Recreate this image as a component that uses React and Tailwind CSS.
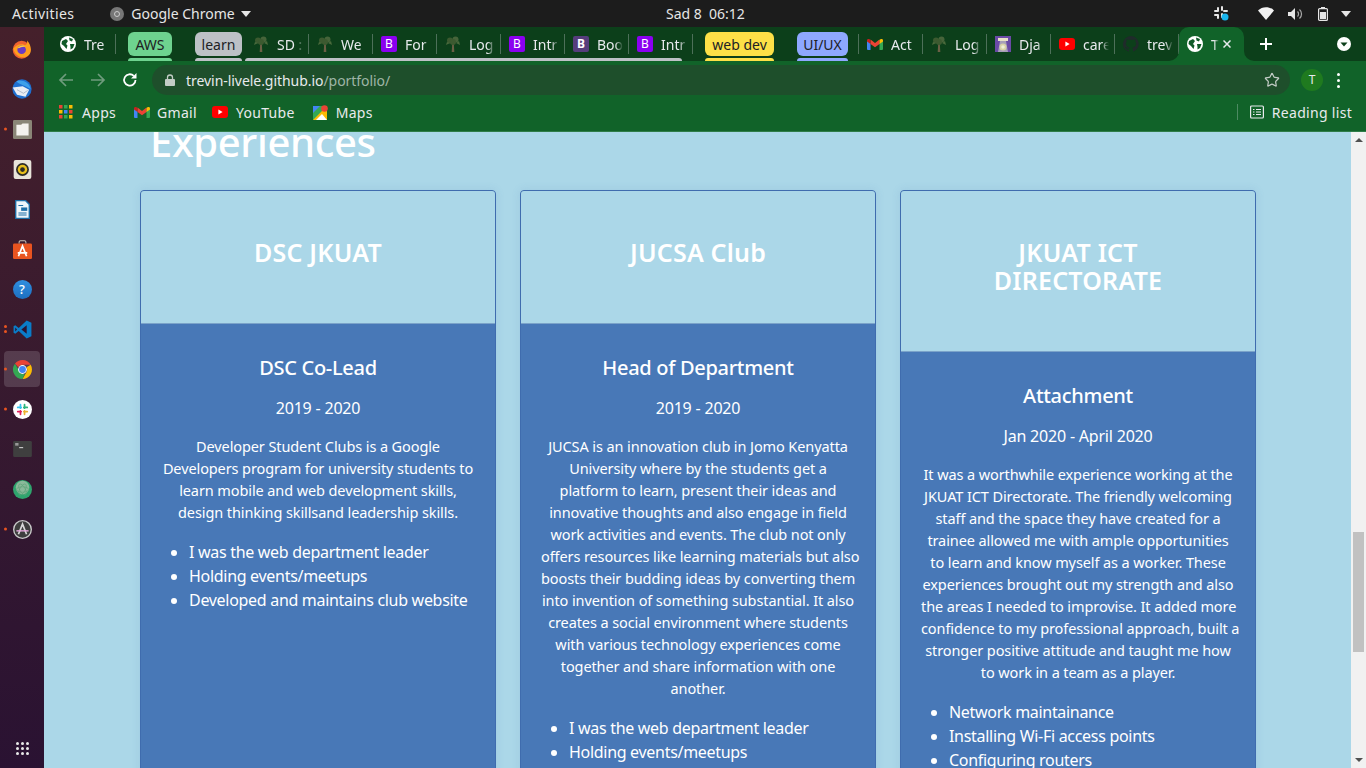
import { Star } from 'lucide-react';

const UI_FONT = "font-['Noto_Sans',sans-serif]";

const Globe = ({ size = 16 }) => (
  <svg width={size} height={size} viewBox="0 0 16 16" className="shrink-0">
    <circle cx="8" cy="8" r="8" fill="#fff" />
    <path d="M2 5 L6 3 L8 5 L6 8 L7.5 9.5 L6.5 13 L4 10 L1.5 8Z M9 1.5 L13 3 L12 5.5 L9.5 4.5Z M10 8 L14.5 8 L13 12 L10.5 13.5 L10.5 11Z" fill="#0f5a28" />
  </svg>
);

const Tree = () => (
  <svg width="16" height="16" viewBox="0 0 16 16" className="shrink-0">
    <path d="M7.200 7 H8.800 L9.300 16 H6.700Z" fill="#6b5f45" />
    <circle cx="5" cy="4.500" r="3" fill="#3c5a30" />
    <circle cx="10.500" cy="3.500" r="3" fill="#46643a" />
    <circle cx="8" cy="6" r="3" fill="#3c5a30" />
    <path d="M2 6 L1 9 L5 7Z M14 5 L15 9 L11 7Z" fill="#4a6a3c" />
  </svg>
);

const Boot = ({ dark }) => (
  <span className={`flex h-4 w-4 shrink-0 items-center justify-center rounded-[2px] text-[12px] leading-none text-white ${dark ? 'bg-[#563d7c] font-bold' : 'bg-[#8b00f0]'}`}>B</span>
);

const GmailIcon = ({ size = 16 }) => (
  <svg width={size} height={size * 0.75} viewBox="0 0 16 12" className="shrink-0">
    <path d="M0 2 V11 a1 1 0 0 0 1 1 H3.5 V5Z" fill="#4285f4" />
    <path d="M16 2 V11 a1 1 0 0 1 -1 1 H12.5 V5Z" fill="#34a853" />
    <path d="M3.5 6 L3.5 1.5 L8 5 L12.5 1.5 L12.5 6 L8 9.2Z" fill="#ea4335" />
    <path d="M0 2.5 a1.6 1.6 0 0 1 2.6 -1.2 L3.5 2 V6 L0 3.4Z" fill="#c5221f" />
    <path d="M16 2.5 a1.6 1.6 0 0 0 -2.6 -1.2 L12.5 2 V6 L16 3.4Z" fill="#fbbc04" />
  </svg>
);

const YoutubeIcon = () => (
  <svg width="16" height="12" viewBox="0 0 16 12" className="shrink-0">
    <rect width="16" height="12" rx="3" fill="#f00" />
    <path d="M6.4 3.4 L10.6 6 L6.4 8.6Z" fill="#fff" />
  </svg>
);

const DjangoIcon = () => (
  <svg width="16" height="16" viewBox="0 0 16 16" className="shrink-0">
    <rect width="16" height="16" fill="#6b4aa6" />
    <rect x="3" y="2" width="10" height="3" fill="#e8e0c8" />
    <path d="M5 5 H11 L13 16 H3Z" fill="#a89fb8" />
    <circle cx="8" cy="11" r="3.500" fill="#d8d2a8" />
    <circle cx="8" cy="11" r="1.800" fill="#f0eed8" />
  </svg>
);

const GithubIcon = () => (
  <svg width="16" height="16" viewBox="0 0 16 16" fill="#1f2b2a" className="shrink-0">
    <path d="M8 0a8 8 0 0 0-2.500 15.600c.400.100.500-.200.500-.400v-1.400c-2.200.500-2.700-1-2.700-1-.400-.900-.900-1.200-.900-1.200-.700-.500.100-.500.100-.500.800.100 1.200.800 1.200.800.700 1.200 1.900.900 2.300.700.100-.500.300-.900.500-1.100-1.800-.200-3.600-.900-3.600-4 0-.900.300-1.600.800-2.100-.100-.200-.400-1 .100-2.100 0 0 .700-.200 2.200.800a7.600 7.600 0 0 1 4 0c1.500-1 2.200-.800 2.200-.800.400 1.100.200 1.900.100 2.100.500.600.800 1.300.800 2.100 0 3.100-1.900 3.700-3.700 3.900.300.300.600.800.600 1.500v2.200c0 .200.100.500.500.400A8 8 0 0 0 8 0z" />
  </svg>
);

const Tab = ({ icon, label }) => (
  <div className="relative flex h-[34px] w-16 shrink-0 items-center pl-2">
    {icon}
    <span className="ml-2 w-[26px] overflow-hidden whitespace-nowrap text-[14px] text-[#e8eaed] [mask-image:linear-gradient(to_right,black_70%,transparent)]">{label}</span>
    <span className="absolute right-0 top-[7px] h-5 w-px bg-[#4d7059]" />
  </div>
);

const Pill = ({ label, bg, w, ml }) => (
  <div className={`relative flex h-[34px] shrink-0 items-start pt-[5px] ${w} ${ml}`}>
    <span className={`flex h-6 w-full items-center justify-center rounded-md text-[14px] text-[#202124] ${bg}`}>{label}</span>
    <span className={`absolute bottom-0 left-0 right-0 h-[3px] rounded-t-[3px] ${bg}`} />
  </div>
);

function TabStrip() {
  return (
    <div className="flex h-[34px] items-start bg-[#0c3f1a] pl-2">
      <Tab icon={<Globe />} label="Tre" />
      <Pill label="AWS" bg="bg-[#6ed38f]" w="w-11" ml="ml-3" />
      <Pill label="learn" bg="bg-[#bdc1c6]" w="w-[47px]" ml="ml-[23px]" />
      <div className="relative ml-[3px] flex">
        <Tab icon={<Tree />} label="SD :" />
        <Tab icon={<Tree />} label="We" />
        <Tab icon={<Boot />} label="For" />
        <Tab icon={<Tree />} label="Log" />
        <Tab icon={<Boot />} label="Intr" />
        <Tab icon={<Boot dark />} label="Boo" />
        <Tab icon={<Boot />} label="Intr" />
        <span className="absolute bottom-0 left-0 right-[11px] h-[3px] rounded-t-[3px] bg-[#bdc1c6]" />
      </div>
      <Pill label="web dev" bg="bg-[#fde047]" w="w-[69px]" ml="ml-3" />
      <Pill label="UI/UX" bg="bg-[#8ea8ff]" w="w-[51px]" ml="ml-[23px]" />
      <div className="relative ml-[11px] flex">
        <span className="absolute -left-px top-[7px] h-5 w-px bg-[#4d7059]" />
        <Tab icon={<GmailIcon />} label="Act" />
        <Tab icon={<Tree />} label="Log" />
        <Tab icon={<DjangoIcon />} label="Dja" />
        <Tab icon={<YoutubeIcon />} label="care" />
        <Tab icon={<GithubIcon />} label="trev" />
      </div>
      <div className="relative flex h-[34px] w-[65px] shrink-0 items-center rounded-t-[10px] bg-[#116329] pl-2">
        <span className="absolute -left-2.5 bottom-0 h-2.5 w-2.5 overflow-hidden">
          <span className="block h-2.5 w-2.5 rounded-br-[10px] shadow-[5px_5px_0_5px_#116329]" />
        </span>
        <span className="absolute -right-2.5 bottom-0 h-2.5 w-2.5 overflow-hidden">
          <span className="block h-2.5 w-2.5 rounded-bl-[10px] shadow-[-5px_5px_0_5px_#116329]" />
        </span>
        <Globe />
        <span className="ml-[8px] w-[8px] overflow-hidden whitespace-nowrap text-[14px] text-[#e8eaed] [mask-image:linear-gradient(to_right,black_40%,transparent)]">T</span>
        <svg width="8" height="8" viewBox="0 0 8 8" className="ml-[4px]"><path d="M.5 .5 L7.500 7.500 M7.500 .5 L.5 7.500" stroke="#e8eaed" strokeWidth="1.500" /></svg>
      </div>
      <svg width="12" height="12" viewBox="0 0 12 12" className="ml-4 mt-[11px] shrink-0"><path d="M6 0 V12 M0 6 H12" stroke="#fff" strokeWidth="2" /></svg>
      <svg width="14" height="14" viewBox="0 0 14 14" className="ml-[65px] mt-[10px] shrink-0">
        <circle cx="7" cy="7" r="7" fill="#fff" />
        <path d="M3.500 5.500 H10.500 L7 9.500Z" fill="#0c3f1a" />
      </svg>
    </div>
  );
}

function Toolbar() {
  return (
    <div className="flex h-[35px] items-center bg-[#116329] pt-[3px]">
      <svg width="16" height="16" viewBox="0 0 16 16" className="ml-[14px] shrink-0" fill="none" stroke="#6f9c7d" strokeWidth="1.700">
        <path d="M15 8 H2 M8 2 L2 8 L8 14" />
      </svg>
      <svg width="16" height="16" viewBox="0 0 16 16" className="ml-4 shrink-0" fill="none" stroke="#6f9c7d" strokeWidth="1.700">
        <path d="M1 8 H14 M8 2 L14 8 L8 14" />
      </svg>
      <svg width="16" height="16" viewBox="0 0 16 16" className="ml-4 shrink-0" fill="none">
        <path d="M13.500 8 A5.700 5.700 0 1 1 11.800 3.900" stroke="#fff" strokeWidth="1.800" />
        <path d="M14.500 1 V6.500 H9Z" fill="#fff" />
      </svg>
      <div className="ml-[14px] flex h-[30px] w-[1138px] items-center rounded-full bg-[#1e4f2b] pl-[13px] pr-2.5">
        <svg width="10" height="12" viewBox="0 0 10 12" className="shrink-0">
          <rect y="5" width="10" height="7" rx="1" fill="#c3ccc6" />
          <path d="M2.500 5.500 V3.500 a2.500 2.500 0 0 1 5 0 V5.500" fill="none" stroke="#c3ccc6" strokeWidth="1.300" />
        </svg>
        <span className="ml-[11px] text-[14px] tracking-[-0.05px] text-[#e8eaed]">trevin-livele.github.io<span className="text-[#9fb5a6]">/portfolio/</span></span>
        <Star className="ml-auto h-4 w-4 text-[#c3ccc6]" strokeWidth={1.800} />
      </div>
      <span className="ml-[11px] flex h-[22px] w-[22px] items-center justify-center rounded-full bg-[#1f7a1f] text-[12px] text-[#e8eaed]">T</span>
      <div className="ml-[14px] flex flex-col gap-[3px]">
        <span className="h-[3px] w-[3px] rounded-full bg-white" />
        <span className="h-[3px] w-[3px] rounded-full bg-white" />
        <span className="h-[3px] w-[3px] rounded-full bg-white" />
      </div>
    </div>
  );
}

function Bookmarks() {
  return (
    <div className="flex h-9 items-center border-b border-[#2f7d48] bg-[#116329] pb-[3px] text-[14px] tracking-[0.3px] text-[#e8eaed]">
      <svg width="14" height="14" viewBox="0 0 14 14" className="ml-[15px] shrink-0">
        {[0, 5, 10].map((x, i) => [0, 5, 10].map((y, j) => (
          <rect key={`${i}${j}`} x={x} y={y} width="3.500" height="3.500" fill={['#ea4335', '#34a853', '#fbbc04', '#4285f4'][(i + j * 2) % 4]} />
        )))}
      </svg>
      <span className="ml-[9px]">Apps</span>
      <span className="ml-[18px]"><GmailIcon /></span>
      <span className="ml-[7px]">Gmail</span>
      <span className="ml-[15px]"><YoutubeIcon /></span>
      <span className="ml-2">YouTube</span>
      <svg width="15" height="15" viewBox="0 0 15 15" className="ml-[18px] shrink-0">
        <rect y="1" width="14" height="14" fill="#34a853" />
        <path d="M0 15 L14 1 V15Z" fill="#fbbc04" />
        <path d="M0 1 H7 L0 8Z" fill="#4285f4" />
        <path d="M3 15 L9 9 L14 15Z" fill="#fff" />
        <circle cx="11.500" cy="3.500" r="3.300" fill="#ea4335" />
      </svg>
      <span className="ml-[8px]">Maps</span>
      <span className="ml-auto h-[16px] w-px bg-[#4d8a62]" />
      <svg width="14" height="14" viewBox="0 0 14 14" className="ml-3 shrink-0" fill="none" stroke="#e8eaed" strokeWidth="1.200">
        <rect x=".6" y="1" width="12.800" height="12" rx="1" />
        <path d="M3 4.500 H4.500 M6 4.500 H11 M3 7 H4.500 M6 7 H11 M3 9.500 H4.500 M6 9.500 H11" />
      </svg>
      <span className="ml-2 mr-[14px]">Reading list</span>
    </div>
  );
}

const DOCK = [
  { dot: 0, icon: (
    <svg width="20" height="20" viewBox="0 0 28 28">
      <circle cx="13.500" cy="15" r="12.500" fill="#f0632f" />
      <path d="M2 13 C3 24 16 30 24 22 C28 17 27 8 21 2 C22 8 19 9 17 8 C10 6 6 9 2 13Z" fill="#ff9f1c" />
      <circle cx="13.500" cy="15" r="6" fill="#6a3bc4" />
      <path d="M8 13 C10 9 16 8 19 11 C15 10 12 12 8 13Z" fill="#ffcf3f" />
    </svg>
  ) },
  { dot: 0, icon: (
    <svg width="20" height="20" viewBox="0 0 28 28">
      <circle cx="14" cy="14" r="13.500" fill="#1e6fd0" />
      <path d="M6 3 C14 0 25 5 26 14 C20 9 10 8 6 3Z" fill="#3ea0ea" />
      <path d="M1 12 L15 10 L24 15 L19 25 L7 22Z" fill="#e9edf4" />
      <path d="M7 15 L16 20 L22 16" fill="none" stroke="#a9b4c6" strokeWidth="1.200" />
    </svg>
  ) },
  { dot: 1, icon: (
    <svg width="19" height="19" viewBox="0 0 28 28">
      <rect x="0" y="0" width="28" height="28" rx="2" fill="#8a8677" />
      <path d="M5 7 H12 L14 5 H23 V23 H5Z" fill="#f4f2ee" />
    </svg>
  ) },
  { dot: 0, icon: (
    <svg width="19" height="19" viewBox="0 0 28 28">
      <rect x="1" y="0" width="26" height="28" rx="3" fill="#e8e4da" />
      <circle cx="14" cy="14" r="9.500" fill="#2b2b26" />
      <circle cx="14" cy="14" r="7" fill="#e8c01c" />
      <circle cx="14" cy="14" r="3.500" fill="#2b2b26" />
    </svg>
  ) },
  { dot: 0, icon: (
    <svg width="19" height="19" viewBox="0 0 28 28">
      <path d="M3 0 H19 L25 6 V28 H3Z" fill="#1d6fa8" />
      <path d="M5 2 H18 L23 7 V26 H5Z" fill="#eef6fb" />
      <path d="M8 8 H15 M8 19 H20 M8 22 H20" stroke="#1d6fa8" strokeWidth="1.500" />
      <rect x="12" y="11" width="9" height="5" fill="#1d6fa8" />
    </svg>
  ) },
  { dot: 0, icon: (
    <svg width="19" height="19" viewBox="0 0 28 28">
      <rect x="0" y="5" width="28" height="23" rx="2" fill="#e95420" />
      <path d="M9 5 V3 a2 2 0 0 1 2 -2 H17 a2 2 0 0 1 2 2 V5" fill="none" stroke="#c9c3bb" strokeWidth="1.500" />
      <path d="M8 24 L14 9 L20 24 M7 19 H21" fill="none" stroke="#fff" strokeWidth="2.500" />
    </svg>
  ) },
  { dot: 0, icon: (
    <div className="flex h-[19px] w-[19px] items-center justify-center rounded-full bg-gradient-to-b from-[#2f8fe0] to-[#1d6fc0] text-[13px] font-medium leading-none text-white">?</div>
  ) },
  { dot: 2, icon: (
    <svg width="19" height="19" viewBox="0 0 100 100">
      <path d="M72 3 L97 15 V85 L72 97 L30 58 L12 72 L3 67 V33 L12 28 L30 42Z" fill="#0a7cc8" />
      <path d="M72 28 L44 50 L72 72Z" fill="#2b1331" />
      <path d="M12 39 L21 50 L12 61Z" fill="#2b1331" />
    </svg>
  ) },
  { dot: 1, active: true, icon: (
    <svg width="19" height="19" viewBox="0 0 28 28">
      <path d="M14 0 A14 14 0 0 1 26.100 7 H14 A7 7 0 0 0 7.900 10.500 L2.900 5.500 A14 14 0 0 1 14 0Z" fill="#ea4335" />
      <path d="M26.100 7 A14 14 0 0 1 14 28 L20 17.500 A7 7 0 0 0 20 10.500Z" fill="#fbbc04" />
      <path d="M14 28 A14 14 0 0 1 2.900 5.500 L8 14 A7 7 0 0 0 17.500 20Z" fill="#34a853" />
      <circle cx="14" cy="14" r="6.500" fill="#fff" />
      <circle cx="14" cy="14" r="5" fill="#4285f4" />
    </svg>
  ) },
  { dot: 1, icon: (
    <svg width="19" height="19" viewBox="0 0 28 28">
      <circle cx="14" cy="14" r="14" fill="#fff" />
      <path d="M11 7 V12 M7 11 H12" stroke="#36c5f0" strokeWidth="2.600" strokeLinecap="round" />
      <path d="M17 7 V12 M16 11 H21" stroke="#2eb67d" strokeWidth="2.600" strokeLinecap="round" />
      <path d="M7 17 H12 M11 16 V21" stroke="#e01e5a" strokeWidth="2.600" strokeLinecap="round" />
      <path d="M16 17 H21 M17 16 V21" stroke="#ecb22e" strokeWidth="2.600" strokeLinecap="round" />
    </svg>
  ) },
  { dot: 0, icon: (
    <svg width="19" height="16" viewBox="0 0 28 24">
      <rect width="28" height="24" rx="2" fill="#3f3f3f" />
      <rect x="3" y="3" width="5" height="4" fill="#999" />
      <path d="M9 10 H15" stroke="#ddd" strokeWidth="1.500" />
    </svg>
  ) },
  { dot: 0, icon: (
    <svg width="19" height="19" viewBox="0 0 28 28">
      <circle cx="14" cy="14" r="14" fill="#2fa56e" />
      <circle cx="14" cy="11" r="10" fill="#8ab99a" />
      <g fill="none" stroke="#5fa57a" strokeWidth="1">
        <ellipse cx="14" cy="14" rx="9" ry="4" />
        <ellipse cx="14" cy="14" rx="9" ry="4" transform="rotate(60 14 14)" />
        <ellipse cx="14" cy="14" rx="9" ry="4" transform="rotate(120 14 14)" />
      </g>
    </svg>
  ) },
  { dot: 1, icon: (
    <svg width="19" height="19" viewBox="0 0 28 28">
      <circle cx="14" cy="14" r="13" fill="#3e3e3e" stroke="#c9c9c9" strokeWidth="2" />
      <path d="M8 21 L14 6 L20 21" fill="none" stroke="#d8d8d8" strokeWidth="2.500" />
      <path d="M5 16 H23" stroke="#e9a9e0" strokeWidth="2" />
    </svg>
  ) },
];

function Dock() {
  return (
    <aside className="flex w-11 shrink-0 flex-col bg-gradient-to-b from-[#45202b] to-[#2a1232] pb-[13px] pt-[2px]">
      {DOCK.map((d, i) => (
        <div key={i} className="relative flex h-10 items-center justify-center">
          {d.active && <span className="absolute inset-x-1 inset-y-0.5 rounded bg-white/15" />}
          {d.dot > 0 && (
            <span className="absolute left-1 top-1/2 flex -translate-y-1/2 flex-col gap-[2px]">
              {(d.dot === 2 ? [0, 1] : [0]).map((k) => <span key={k} className="h-[3px] w-[3px] rounded-full bg-[#e95420]" />)}
            </span>
          )}
          <span className="relative flex">{d.icon}</span>
        </div>
      ))}
      <div className="mt-auto grid w-[13px] grid-cols-3 gap-[2px] self-center">
        {Array.from({ length: 9 }).map((_, i) => <span key={i} className="h-[3px] w-[3px] rounded-full bg-[#e8e8e8]" />)}
      </div>
    </aside>
  );
}

const CARDS = [
  {
    title: ['DSC JKUAT'],
    role: 'DSC Co-Lead',
    date: '2019 - 2020',
    lines: [
      'Developer Student Clubs is a Google',
      'Developers program for university students to',
      'learn mobile and web development skills,',
      'design thinking skillsand leadership skills.',
    ],
    items: ['I was the web department leader', 'Holding events/meetups', 'Developed and maintains club website'],
  },
  {
    title: ['JUCSA Club'],
    role: 'Head of Department',
    date: '2019 - 2020',
    lines: [
      'JUCSA is an innovation club in Jomo Kenyatta',
      'University where by the students get a',
      'platform to learn, present their ideas and',
      'innovative thoughts and also engage in field',
      'work activities and events. The club not only',
      'offers resources like learning materials but also',
      'boosts their budding ideas by converting them',
      'into invention of something substantial. It also',
      'creates a social environment where students',
      'with various technology experiences come',
      'together and share information with one',
      'another.',
    ],
    items: ['I was the web department leader', 'Holding events/meetups', 'Developed and maintains club website'],
  },
  {
    title: ['JKUAT ICT', 'DIRECTORATE'],
    role: 'Attachment',
    date: 'Jan 2020 - April 2020',
    lines: [
      'It was a worthwhile experience working at the',
      'JKUAT ICT Directorate. The friendly welcoming',
      'staff and the space they have created for a',
      'trainee allowed me with ample opportunities',
      'to learn and know myself as a worker. These',
      'experiences brought out my strength and also',
      'the areas I needed to improvise. It added more',
      'confidence to my professional approach, built a',
      'stronger positive attitude and taught me how',
      'to work in a team as a player.',
    ],
    items: ['Network maintainance', 'Installing Wi-Fi access points', 'Configuring routers'],
  },
];

function Card({ card }) {
  return (
    <div className="flex h-[640px] w-[356px] flex-col rounded border border-[#3f6cae] bg-[#4878b7] text-white shadow-[0_0_8px_rgba(72,120,183,0.15)]">
      <div className="rounded-t-[3px] border-b border-[#7ba3c9] bg-[#abd7e8] px-5 pb-[57px] pt-[47px] text-center text-[25px] font-semibold leading-[28px] tracking-[0.2px]">
        {card.title.map((t) => <div key={t}>{t}</div>)}
      </div>
      <div className="px-5 pt-8 text-center">
        <h4 className="text-[20px] font-medium leading-[24px] tracking-[-0.3px]">{card.role}</h4>
        <p className="mt-4 text-[16px] leading-[24px] tracking-[-0.2px]">{card.date}</p>
        <div className="mt-[15px] text-[14.500px] leading-[22px] tracking-[-0.1px]">
          {card.lines.map((l) => <div key={l} className="whitespace-nowrap">{l}</div>)}
        </div>
        <ul className="mt-[17px] list-disc pl-7 text-left text-[16px] leading-[24px] tracking-[-0.3px]">
          {card.items.map((it) => <li key={it} className="whitespace-nowrap">{it}</li>)}
        </ul>
      </div>
    </div>
  );
}

export default function App() {
  return (
    <div className={`flex h-[768px] w-[1366px] flex-col overflow-hidden ${UI_FONT}`}>
      <header className="relative flex h-[27px] shrink-0 items-center bg-[#1c1c1c] text-[14px] text-[#e6e6e6]">
        <span className="ml-3 tracking-[0.4px]">Activities</span>
        <span className="ml-[36px] flex h-3.5 w-3.5 items-center justify-center rounded-full bg-[#777]">
          <span className="h-1.5 w-1.5 rounded-full border border-[#ccc]" />
        </span>
        <span className="ml-[7px]">Google Chrome</span>
        <svg width="10" height="6" viewBox="0 0 10 6" className="ml-[6px]"><path d="M0 0 H10 L5 6Z" fill="#e6e6e6" /></svg>
        <span className="absolute left-[666px] whitespace-pre">Sad 8  06:12</span>
        <div className="ml-auto flex items-center">
          <svg width="15" height="15" viewBox="0 0 15 15">
            <path d="M4 2 V5 M1 5 H4 M8 1 V4 M10 5 H13 M1 9 H4 M4 9 V12 M8 8 V11" stroke="#e6e6e6" strokeWidth="2" strokeLinecap="round" />
            <circle cx="11" cy="11" r="3.500" fill="#19b5ee" />
          </svg>
          <svg width="16" height="13" viewBox="0 0 16 13" className="ml-[29px]"><path d="M0 3.500 C4 -1 12 -1 16 3.500 L8 13Z" fill="#f2f2f2" /></svg>
          <svg width="15" height="12" viewBox="0 0 15 12" className="ml-[14px]">
            <path d="M0 4 H3 L7 0 V12 L3 8 H0Z" fill="#e6e6e6" />
            <path d="M9.500 3.500 a3.500 3.500 0 0 1 0 5 M11.500 1.500 a6 6 0 0 1 0 9" fill="none" stroke="#a8a8a8" strokeWidth="1.200" />
          </svg>
          <svg width="10" height="14" viewBox="0 0 10 14" className="ml-[15px]">
            <rect x=".6" y="1.600" width="8.800" height="11.800" rx="1" fill="none" stroke="#e6e6e6" strokeWidth="1.200" />
            <rect x="3" y="0" width="4" height="2" fill="#e6e6e6" />
            <rect x="2" y="5" width="6" height="7" fill="#e6e6e6" />
          </svg>
          <svg width="10" height="6" viewBox="0 0 10 6" className="ml-[13px] mr-[15px]"><path d="M0 0 H10 L5 6Z" fill="#e6e6e6" /></svg>
        </div>
      </header>
      <div className="flex min-h-0 flex-1">
        <Dock />
        <div className="flex min-w-0 flex-1 flex-col">
          <TabStrip />
          <Toolbar />
          <Bookmarks />
          <div className="flex min-h-0 flex-1">
            <main className="min-w-0 flex-1 overflow-hidden bg-[#abd7e8]">
              <div className="-mt-[14px] pl-24">
                <h2 className="ml-2.5 text-[40px] font-medium leading-[48px] tracking-[-0.35px] text-white">Experiences</h2>
                <div className="mt-6 flex items-start gap-6">
                  {CARDS.map((c) => <Card key={c.role} card={c} />)}
                </div>
              </div>
            </main>
            <div className="flex w-[15px] shrink-0 flex-col items-center bg-[#f1f1f1]">
              <span className="mt-[6px] h-0 w-0 border-x-[4px] border-b-[4px] border-x-transparent border-b-[#505050]" />
              <span className="mt-[390px] h-[120px] w-[11px] bg-[#c1c1c1]" />
              <span className="mt-auto mb-[6px] h-0 w-0 border-x-[4px] border-t-[4px] border-x-transparent border-t-[#505050]" />
            </div>
          </div>
        </div>
      </div>
    </div>
  );
}
